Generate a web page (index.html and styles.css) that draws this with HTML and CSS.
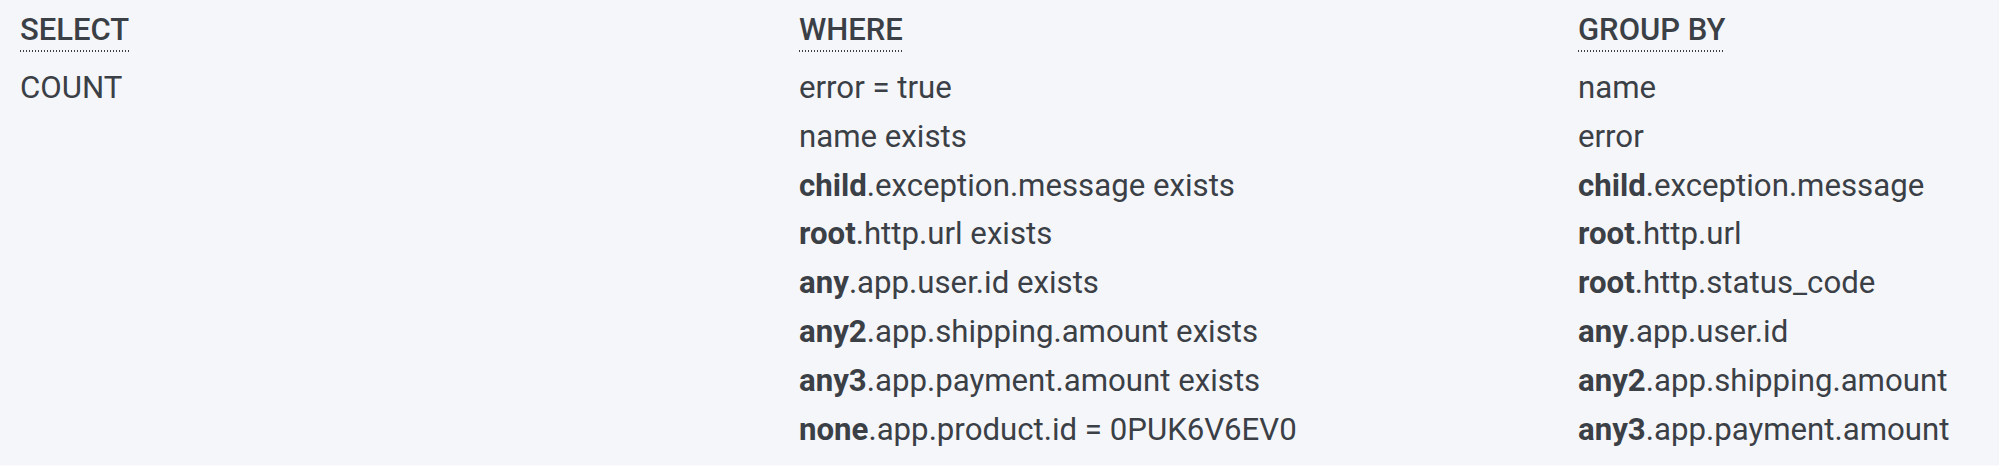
FILE: index.html
```html
<!DOCTYPE html>
<html lang="en">
<head>
<meta charset="UTF-8">
<meta name="viewport" content="width=device-width, initial-scale=1.0">
<title>Query</title>
<link rel="stylesheet" href="styles.css">
</head>
<body>
<div class="query">
    <div class="clause">
        <h3 class="clause-title"><span>SELECT</span></h3>
        <div class="item">COUNT</div>
    </div>
    <div class="clause">
        <h3 class="clause-title"><span>WHERE</span></h3>
        <div class="item">error = true</div>
        <div class="item">name exists</div>
        <div class="item"><b>child</b>.exception.message exists</div>
        <div class="item"><b>root</b>.http.url exists</div>
        <div class="item"><b>any</b>.app.user.id exists</div>
        <div class="item"><b>any2</b>.app.shipping.amount exists</div>
        <div class="item"><b>any3</b>.app.payment.amount exists</div>
        <div class="item"><b>none</b>.app.product.id = 0PUK6V6EV0</div>
    </div>
    <div class="clause">
        <h3 class="clause-title"><span>GROUP BY</span></h3>
        <div class="item">name</div>
        <div class="item">error</div>
        <div class="item"><b>child</b>.exception.message</div>
        <div class="item"><b>root</b>.http.url</div>
        <div class="item"><b>root</b>.http.status_code</div>
        <div class="item"><b>any</b>.app.user.id</div>
        <div class="item"><b>any2</b>.app.shipping.amount</div>
        <div class="item"><b>any3</b>.app.payment.amount</div>
    </div>
</div>
</body>
</html>
```

FILE: styles.css
```css
html, body {
    margin: 0;
    background-color: #f5f6fa;
}
body {
    font-family: Roboto, "Liberation Sans", sans-serif;
    color: #3b3f46;
    height: 465px;
    border-bottom: 1px solid #fbfbfd;
    overflow: hidden;
}
.query {
    display: grid;
    grid-template-columns: 779px 779px 1fr;
    padding: 8px 0 0 20px;
}
.clause-title {
    margin: 0 0 12px 0;
    font-size: 31px;
    font-weight: 500;
    line-height: 44px;
}
.clause-title span {
    padding-bottom: 4px;
    background-image: linear-gradient(to right, #3b3f46 50%, transparent 50%);
    background-size: 3px 2px;
    background-repeat: repeat-x;
    background-position: left bottom;
}
.item {
    font-size: 31.2px;
    line-height: 48.8px;
}
.item b {
    font-weight: 700;
}
```
